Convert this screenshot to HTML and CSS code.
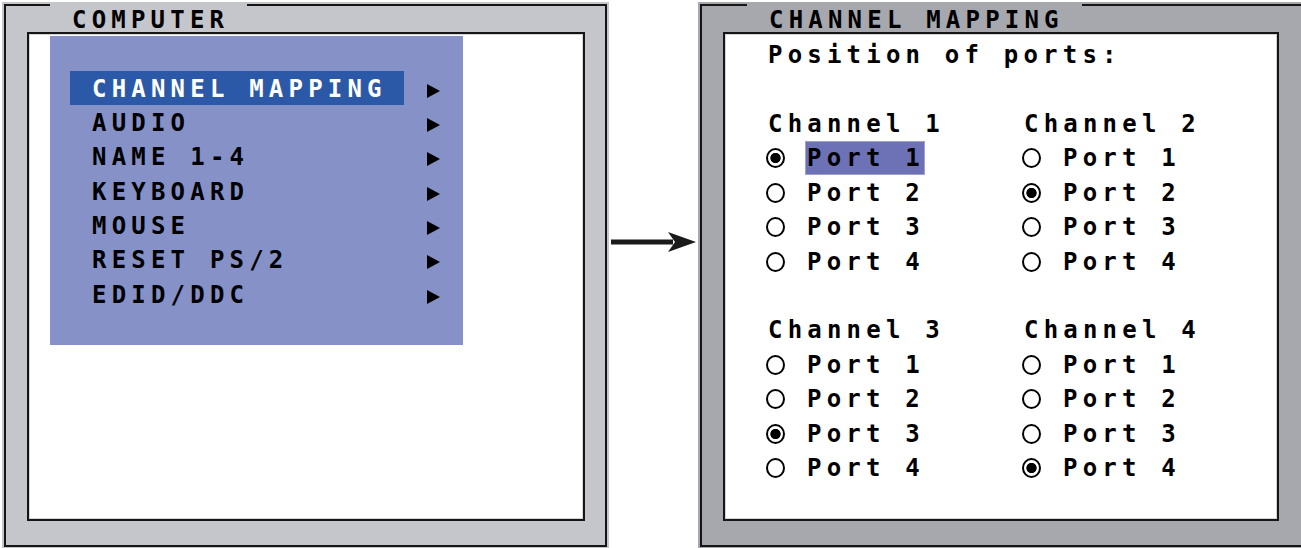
FILE: index.html
```html
<!DOCTYPE html>
<html>
<head>
  <link rel="stylesheet" href="styles.css">
  <title>Channel mapping</title>
</head>
<body>
  <div class="page">
    <!-- main OSD menu -->
    <div class="panel panel-light">
      <div class="frame">
        <div class="title">COMPUTER</div>
        <div class="screen">
          <div class="menu">
            <div class="menu-row"><span class="menu-label active">CHANNEL MAPPING</span><span class="arrow"></span></div>
            <div class="menu-row"><span class="menu-label">AUDIO</span><span class="arrow"></span></div>
            <div class="menu-row"><span class="menu-label">NAME 1-4</span><span class="arrow"></span></div>
            <div class="menu-row"><span class="menu-label">KEYBOARD</span><span class="arrow"></span></div>
            <div class="menu-row"><span class="menu-label">MOUSE</span><span class="arrow"></span></div>
            <div class="menu-row"><span class="menu-label">RESET PS/2</span><span class="arrow"></span></div>
            <div class="menu-row"><span class="menu-label">EDID/DDC</span><span class="arrow"></span></div>
          </div>
        </div>
      </div>
    </div>

    <div class="link">
      <svg width="89" height="24" viewBox="0 0 89 24">
        <rect x="2" y="9.5" width="62" height="5" fill="#1a1a1a"/>
        <polygon points="87,12 59,2 66,12 59,22" fill="#1a1a1a"/>
      </svg>
    </div>

    <!-- channel mapping submenu -->
    <div class="panel panel-dark">
      <div class="frame">
        <div class="title">CHANNEL MAPPING</div>
        <div class="screen screen-text">
          <div class="line">Position of ports:</div>
          <div class="channels">
            <div class="channel">
              <div class="line">Channel 1</div>
              <div class="port"><span class="radio on"></span><span class="port-label active">Port 1</span></div>
              <div class="port"><span class="radio"></span><span class="port-label">Port 2</span></div>
              <div class="port"><span class="radio"></span><span class="port-label">Port 3</span></div>
              <div class="port"><span class="radio"></span><span class="port-label">Port 4</span></div>
            </div>
            <div class="channel">
              <div class="line">Channel 2</div>
              <div class="port"><span class="radio"></span><span class="port-label">Port 1</span></div>
              <div class="port"><span class="radio on"></span><span class="port-label">Port 2</span></div>
              <div class="port"><span class="radio"></span><span class="port-label">Port 3</span></div>
              <div class="port"><span class="radio"></span><span class="port-label">Port 4</span></div>
            </div>
            <div class="channel">
              <div class="line">Channel 3</div>
              <div class="port"><span class="radio"></span><span class="port-label">Port 1</span></div>
              <div class="port"><span class="radio"></span><span class="port-label">Port 2</span></div>
              <div class="port"><span class="radio on"></span><span class="port-label">Port 3</span></div>
              <div class="port"><span class="radio"></span><span class="port-label">Port 4</span></div>
            </div>
            <div class="channel">
              <div class="line">Channel 4</div>
              <div class="port"><span class="radio"></span><span class="port-label">Port 1</span></div>
              <div class="port"><span class="radio"></span><span class="port-label">Port 2</span></div>
              <div class="port"><span class="radio"></span><span class="port-label">Port 3</span></div>
              <div class="port"><span class="radio on"></span><span class="port-label">Port 4</span></div>
            </div>
          </div>
        </div>
      </div>
    </div>
  </div>
</body>
</html>
```

FILE: styles.css
```css
body {
  margin: 0;
  background: #fff;
  overflow: hidden;
  font-family: "DejaVu Sans Mono", "Liberation Mono", monospace;
  font-weight: bold;
  font-size: 24px;
  letter-spacing: 5.2px;
  color: #000;
}

.page {
  display: flex;
  padding: 2px 0 0 2px;
}

.panel {
  flex: none;
  height: 547px;
  padding: 2px;
  box-sizing: border-box;
}

.panel-light {
  width: 607px;
  background: #c5c6cb;
}

.panel-dark {
  width: 614px;
  background: #a6a8ae;
}

.frame {
  display: flex;
  flex-direction: column;
  height: 543px;
  border: 2px solid #151515;
  box-sizing: border-box;
}

.title {
  align-self: flex-start;
  margin: -2px 0 0 44px;
  padding: 2px 18px 0 22px;
  border-top: 2px solid #c5c6cb;
  line-height: 24px;
  background: #c5c6cb;
}

.panel-dark .title {
  margin-left: 45px;
  border-top-color: #a6a8ae;
  background: #a6a8ae;
}

.screen {
  margin-left: 21px;
  width: 558px;
  height: 489px;
  border: 2px solid #151515;
  box-sizing: border-box;
  background: #fff;
  box-shadow: inset 0 0 0 1px #d4d5d9;
}

.panel-dark .screen {
  width: 556px;
}

/* left menu */
.menu {
  margin: 2px 0 0 21px;
  width: 413px;
  height: 309px;
  padding: 35px 0 0 20px;
  box-sizing: border-box;
  background: #8591c7;
}

.menu-row {
  display: flex;
  height: 34.4px;
}

.menu-label {
  width: 334px;
  padding: 2.5px 0 0 22px;
  line-height: 31.9px;
  box-sizing: border-box;
  white-space: pre;
}

.menu-label.active {
  background: #2b59a8;
  color: #fff;
}

.arrow {
  width: 0;
  height: 0;
  margin: 12.5px 0 0 23px;
  border-left: 13px solid #000;
  border-top: 7.5px solid transparent;
  border-bottom: 7.5px solid transparent;
}

.link {
  flex: none;
  width: 89px;
  padding-top: 228px;
}

.link svg {
  display: block;
}

/* right submenu */
.screen-text {
  padding: 4px 0 0 43px;
}

.line {
  line-height: 34.4px;
  white-space: pre;
}

.channels {
  display: grid;
  grid-template-columns: 256px 256px;
  row-gap: 34.4px;
  margin-top: 34.4px;
}

.port {
  display: flex;
  align-items: center;
  height: 34.4px;
}

.radio {
  width: 19px;
  height: 20px;
  margin-left: -2px;
  border: 2px solid #000;
  border-radius: 50%;
  box-sizing: border-box;
}

.radio.on {
  background: radial-gradient(circle, #000 0 4.8px, transparent 5.5px);
}

.port-label {
  margin-left: 20px;
  padding-left: 2px;
  line-height: 34px;
  white-space: pre;
}

.port-label.active {
  background: #6d72b6;
  box-shadow: inset 0 0 0 1px #9ea2d2;
}
```
